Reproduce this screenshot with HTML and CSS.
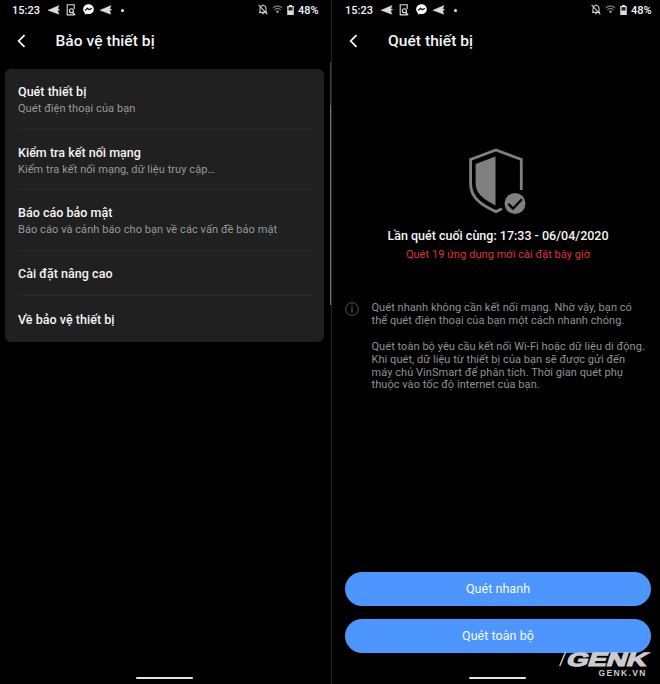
FILE: index.html
```html
<!DOCTYPE html>
<html lang="vi">
<head>
<meta charset="utf-8">
<title>Bảo vệ thiết bị</title>
<link rel="stylesheet" href="styles.css">
</head>
<body>
<svg class="defs" aria-hidden="true">
  <symbol id="plane" viewBox="0 0 12 10"><path d="M0 5.200 11 .6 9.600 4 11.700 4.600 9.600 5.700 10.800 9.200Z" fill="#ddd" stroke="#ddd" stroke-width=".5"/></symbol>
  <symbol id="doc" viewBox="0 0 10 12"><path d="M8.200 10.900H1.200V.8H8.200V5" fill="none" stroke="#ddd" stroke-width="1.100"/><circle cx="5.400" cy="6.700" r="2" fill="none" stroke="#eee" stroke-width="1.100"/><path d="M6.600 8.300 9.200 11" stroke="#eee" stroke-width="1.200"/></symbol>
  <symbol id="chat" viewBox="0 0 11 11"><path d="M5.500.2C2.400.2.2 2.400.2 5.200c0 1.600.6 2.800 1.700 3.700v1.800l1.700-.9c.6.200 1.200.3 1.900.3 3.100 0 5.300-2.100 5.300-4.900S8.600.2 5.500.2Z" fill="#fff"/><path d="M2.200 6.500 4.500 4.200 6.200 5.700 8.800 4.200" fill="none" stroke="#000" stroke-width="1.200"/></symbol>
  <symbol id="bell" viewBox="0 0 10 11"><path d="M2 8V4.500C2 2.700 3.200 1.500 5 1.500S8 2.700 8 4.500V8M1 8.400H9M4 9.800H6M5 .4V1.500M.6.800 9.400 10.400" fill="none" stroke="#ccc" stroke-width="1.100"/></symbol>
  <symbol id="wifi" viewBox="0 0 11 9"><path d="M.7 3C3.500.4 7.500.4 10.300 3M2.300 4.800C4.300 3.100 6.700 3.100 8.700 4.800M4 6.500C5 5.800 6 5.800 7 6.500" fill="none" stroke="#aaa" stroke-width="1"/><path d="M4.300 6.800H6.700L5.500 8.300Z" fill="#ddd"/></symbol>
  <symbol id="battery" viewBox="0 0 7 10"><path d="M2 0H5V1H6.800V10H.2V1H2Z" fill="#ddd"/><path d="M1.500 2.200H5.500V5.500H1.500Z" fill="#222"/></symbol>
  <symbol id="back" viewBox="0 0 9 14"><path d="M7.500 1.200 1.700 7 7.500 12.800" fill="none" stroke="#fff" stroke-width="1.700"/></symbol>
</svg>
<div class="screens">
  <section class="phone">
    <div class="status">
      <span class="time">15:23</span>
      <svg class="plane"><use href="#plane"/></svg><svg class="doc"><use href="#doc"/></svg><svg class="chat"><use href="#chat"/></svg><svg class="plane second"><use href="#plane"/></svg><i class="dot"></i>
      <svg class="bell"><use href="#bell"/></svg><svg class="wifi"><use href="#wifi"/></svg><svg class="battery"><use href="#battery"/></svg><span class="percent">48%</span>
    </div>
    <header class="bar"><svg class="back"><use href="#back"/></svg><h1>Bảo vệ thiết bị</h1></header>
    <div class="card">
      <div class="item"><h2>Quét thiết bị</h2><p>Quét điện thoại của bạn</p></div>
      <div class="item"><h2>Kiểm tra kết nối mạng</h2><p>Kiểm tra kết nối mạng, dữ liệu truy cập…</p></div>
      <div class="item"><h2>Báo cáo bảo mật</h2><p>Báo cáo và cảnh báo cho bạn về các vấn đề bảo mật</p></div>
      <div class="item short"><h2>Cài đặt nâng cao</h2></div>
      <div class="item short last"><h2>Về bảo vệ thiết bị</h2></div>
    </div>
    <i class="home"></i>
    <i class="scroll"></i>
  </section>
  <section class="phone right">
    <div class="status">
      <span class="time">15:23</span>
      <svg class="plane"><use href="#plane"/></svg><svg class="doc"><use href="#doc"/></svg><svg class="chat"><use href="#chat"/></svg><svg class="plane second"><use href="#plane"/></svg><i class="dot"></i>
      <svg class="bell"><use href="#bell"/></svg><svg class="wifi"><use href="#wifi"/></svg><svg class="battery"><use href="#battery"/></svg><span class="percent">48%</span>
    </div>
    <header class="bar"><svg class="back"><use href="#back"/></svg><h1>Quét thiết bị</h1></header>
    <div class="summary">
      <svg class="shield" viewBox="0 0 58 68">
        <path d="M52.300 42V11.500L27 1.900 1.600 11.500V36C1.600 50 13 57.500 27 63.600L33 60.700" fill="none" stroke="#808080" stroke-width="2.800"/>
        <path d="M26.500 8.500V57.500C14 51 6.600 45.500 6.600 35V16Z" fill="#808080"/>
        <circle cx="46" cy="55.500" r="10.500" fill="#808080"/>
        <path d="M39.300 55.800 44 60.500 53 51.200" fill="none" stroke="#000" stroke-width="2.300"/>
      </svg>
      <h2>Lần quét cuối cùng: 17:33 - 06/04/2020</h2>
      <p>Quét 19 ứng dụng mới cài đặt bây giờ</p>
    </div>
    <div class="note">
      <svg class="info" viewBox="0 0 14 14"><circle cx="7" cy="7" r="6.300" fill="none" stroke="#555" stroke-width="1"/><path d="M7 6V10.500M7 3.500V4.900" stroke="#5c5c5c" stroke-width="1.300"/></svg>
      <div>
        <p>Quét nhanh không cần kết nối mạng. Nhờ vậy, bạn có<br>thể quét điện thoại của bạn một cách nhanh chóng.</p>
        <p>Quét toàn bộ yêu cầu kết nối Wi-Fi hoặc dữ liệu di động.<br>Khi quét, dữ liệu từ thiết bị của bạn sẽ được gửi đến<br>máy chủ VinSmart để phân tích. Thời gian quét phụ<br>thuộc vào tốc độ internet của bạn.</p>
      </div>
    </div>
    <div class="actions"><button>Quét nhanh</button><button>Quét toàn bộ</button></div>
    <i class="home"></i>
    <svg class="watermark" viewBox="0 0 101 40">
      <path d="M5.800 9H7.300L1.500 23H0Z" fill="#ccc"/>
      <g transform="translate(6.500 22.600) skewX(-18)"><text class="brand" x="0" y="0" textLength="80" lengthAdjust="spacingAndGlyphs">GENK</text></g>
      <text class="domain" x="39.500" y="32.600" textLength="47">GENK.VN</text>
    </svg>
  </section>
</div>
</body>
</html>
```
FILE: styles.css
```css
* { box-sizing: border-box; }
body { margin: 0; background: #000; color: #f5f5f5; font-family: Roboto, "Liberation Sans", sans-serif; }
h1, h2, p { margin: 0; }
svg, i { display: block; flex: none; }
.defs { position: absolute; width: 0; height: 0; }
.screens { display: grid; grid-template-columns: 331px 329px; height: 684px; overflow: hidden; }
.phone { position: relative; display: flex; flex-direction: column; height: 684px; }
.right { border-left: 1px solid #222; }
.status { display: flex; align-items: center; height: 20px; padding-left: 12px; font-size: 11px; font-weight: 500; }
.right .status { padding-left: 13px; }
.status svg { position: relative; top: -.5px; }
.time { width: 36px; }
.plane { width: 12px; height: 10px; }
.doc { width: 10px; height: 12px; margin-left: 6px; }
.chat { width: 11px; height: 11px; margin-left: 7px; }
.second { margin-left: 6px; }
.dot { width: 3px; height: 3px; margin-left: 9px; border-radius: 50%; background: #eee; }
.bell { width: 10px; height: 11px; margin-left: 134px; }
.wifi { width: 11px; height: 9px; margin-left: 4px; }
.battery { width: 7px; height: 10px; margin-left: 4px; }
.percent { margin-left: 4px; }
.bar { display: flex; align-items: center; height: 42px; padding-left: 16.500px; }
.back { width: 9px; height: 14px; }
.bar h1 { margin-left: 30px; font-size: 15.500px; font-weight: 500; line-height: 20px; letter-spacing: .06px; }
.right .back { margin-left: 1px; }
.right .bar { padding-left: 16px; }
.card { width: 319px; height: 273px; margin: 7px 0 0 5.400px; padding: 0 12.600px; border-radius: 6px; background: #202020; }
.item { height: 60.600px; padding-top: 14px; border-bottom: 1px solid #292929; }
.item h2 { font-size: 12.500px; line-height: 17px; font-weight: 500; letter-spacing: .03px; }
.item p { margin-top: 1px; font-size: 11px; line-height: 16px; color: #999; white-space: nowrap; letter-spacing: .07px; }
.item.short { height: 45.600px; }
.item.last { padding-top: 15px; border: 0; }
.home { width: 57px; height: 2px; margin: auto auto 5px 136.400px; border-radius: 1px; background: #e6e6e6; }
.scroll { position: absolute; top: 62px; right: 0; width: 1px; height: 243px; background: linear-gradient(#444 0 43px, #777 43px); }
.summary { display: flex; flex-direction: column; align-items: center; height: 210px; padding: 86px 0 0 4px; }
.shield { width: 58px; height: 68px; }
.summary h2 { margin-top: 11px; font-size: 12.500px; font-weight: 500; line-height: 18px; }
.summary p { margin-top: 2px; font-size: 11px; line-height: 16px; color: #dc343b; letter-spacing: .05px; }
.note { display: flex; margin: 30px 0 0 13px; font-size: 11px; line-height: 12.900px; color: #929292; white-space: nowrap; letter-spacing: .055px; }
.info { width: 14px; height: 14px; margin: 0 12.500px 0 0; }
.note p + p { margin-top: 12.900px; }
.actions { display: grid; gap: 12.500px; margin: auto 9px 0 13px; }
.actions button { height: 34.500px; padding: 0; border: 0; border-radius: 18px; background: #4d96ff; color: #f7faff; font: 400 12.500px/34px Roboto, sans-serif; letter-spacing: .05px; }
.right .home { margin: 24px 0 5px 137px; }
.watermark { position: absolute; left: 227px; top: 643px; width: 101px; height: 40px; overflow: visible; }
.brand { font: 700 19px "Liberation Sans", sans-serif; fill: #ccc; stroke: #ccc; stroke-width: 1.200; }
.domain { font: 700 8.500px "Liberation Sans", sans-serif; fill: #ccc; }
```
